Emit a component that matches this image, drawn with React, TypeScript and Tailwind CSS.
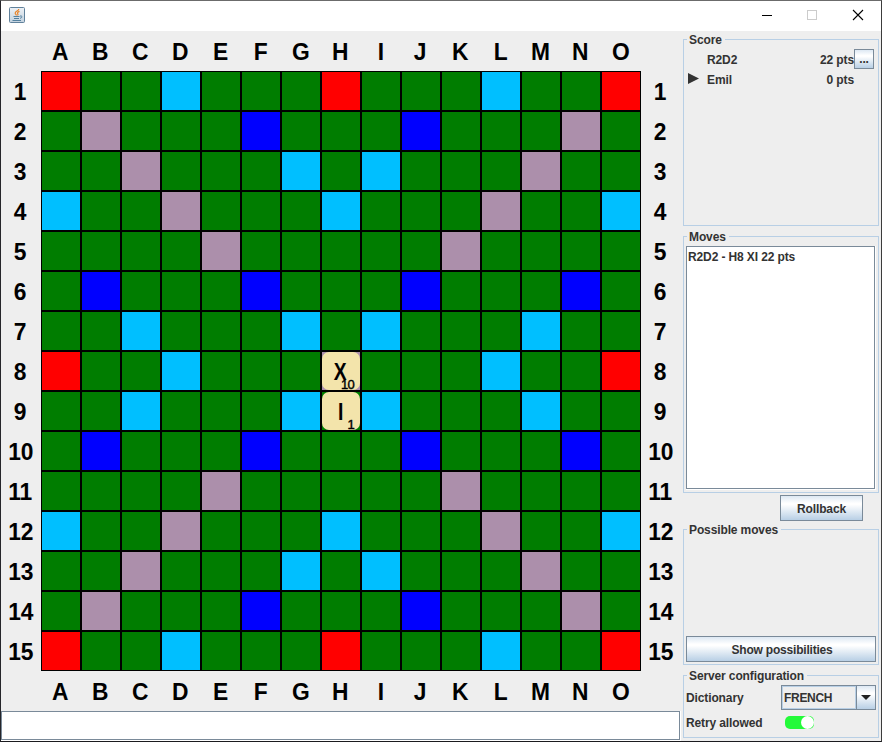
import type { ReactNode } from "react";

const COLS = "ABCDEFGHIJKLMNO".split("");

// R: triple word, P: double word, B: triple letter, C: double letter
const BOARD = [
  "R..C...R...C..R",
  ".P...B...B...P.",
  "..P...C.C...P..",
  "C..P...C...P..C",
  "....P.....P....",
  ".B...B...B...B.",
  "..C...C.C...C..",
  "R..C...P...C..R",
  "..C...C.C...C..",
  ".B...B...B...B.",
  "....P.....P....",
  "C..P...C...P..C",
  "..P...C.C...P..",
  ".P...B...B...P.",
  "R..C...R...C..R",
];

const COLORS: Record<string, string> = {
  R: "bg-[#ff0000]",
  P: "bg-[#ac8fab]",
  B: "bg-[#0000ff]",
  C: "bg-[#00bfff]",
  ".": "bg-[#007d00]",
};

const TILES: Record<string, { letter: string; value: string }> = {
  "7-7": { letter: "X", value: "10" },
  "8-7": { letter: "I", value: "1" },
};

function Label({ children }: { children?: ReactNode }) {
  return (
    <div className="flex h-10 w-10 items-center justify-center text-2xl leading-none font-bold text-black">
      <span className="[transform:translate(-0.5px,1px)_scaleX(0.95)]">{children}</span>
    </div>
  );
}

function Cell({ row, col }: { row: number; col: number }) {
  const tile = TILES[`${row}-${col}`];
  return (
    <div className={`h-10 w-10 border border-black ${COLORS[BOARD[row][col]]}`}>
      {tile && (
        <div className="relative flex h-full w-full items-center justify-center rounded-[7px] bg-[#f3e4ab] text-black">
          <span className="text-[23px] leading-none font-bold [transform:translate(-0.5px,1px)_scaleX(0.84)]">{tile.letter}</span>
          <span className="absolute right-[6px] bottom-[-1px] text-[13px] leading-[13px] font-normal tracking-[-0.7px] [-webkit-text-stroke:0.4px_black]">{tile.value}</span>
        </div>
      )}
    </div>
  );
}

function LetterRow() {
  return (
    <div className="flex">
      <Label />
      {COLS.map((c) => (
        <Label key={c}>{c}</Label>
      ))}
      <Label />
    </div>
  );
}

function Group({ title, className, children }: { title: string; className: string; children?: ReactNode }) {
  return (
    <section className={`relative ml-0.5 w-[196px] shrink-0 border border-[#b8cfe5] ${className}`}>
      <h2 className="absolute -top-[8px] left-[3px] bg-[#eeeeee] pr-[3px] pl-[2px] leading-4 whitespace-nowrap">{title}</h2>
      {children}
    </section>
  );
}

const METAL =
  "flex items-center justify-center border border-[#7a8a99] bg-[linear-gradient(to_bottom,#dde8f3_0%,#ffffff_30%,#ffffff_36%,#b8cfe5_100%)]";

export default function App() {
  return (
    <div className="flex h-[742px] w-[882px] flex-col overflow-hidden border border-t-[#6b6b6b] border-r-[#3c3c3c] border-b-[#1b1b1f] border-l-[#25252a] bg-[#eeeeee] font-['Liberation_Sans',Arial,sans-serif] text-xs font-bold tracking-[-0.12px] text-[#333333]">
      <header className="flex h-[30px] shrink-0 items-center bg-white">
        <svg className="mt-[-2px] ml-2" width="16" height="16" viewBox="0 0 16 16" fill="none">
          <defs>
            <linearGradient id="tile" x1="0" y1="0" x2="0" y2="1">
              <stop offset="0" stopColor="#edf1f5" />
              <stop offset="1" stopColor="#c3d2df" />
            </linearGradient>
          </defs>
          <rect x="0.5" y="0.5" width="15" height="15" rx="1" fill="url(#tile)" stroke="#60819b" />
          <path d="M9.8 2C10 4 6 4.2 6.2 6.2C6.3 7.2 7.4 7.7 7.4 8.5M10.5 4.4C8.8 5 8 5.8 8.7 6.7C9.2 7.3 9 7.9 8.4 8.4" stroke="#e98429" strokeWidth="1.2" />
          <path d="M4.5 9.5H10.5M5 11.5H10M11 9C13.6 8.4 13.6 10.9 11 11.3M3.5 13.5H12" stroke="#54819f" strokeWidth="1" />
        </svg>
        <svg className="ml-auto" width="120" height="30" viewBox="0 0 120 30" fill="none" shapeRendering="crispEdges">
          <path d="M1 14.5H11" stroke="#000" />
          <rect x="46.5" y="9.5" width="9" height="9" stroke="#cccccc" />
          <path d="M92 9L102 19M102 9L92 19" stroke="#000" strokeWidth="1.1" shapeRendering="auto" />
        </svg>
      </header>

      <div className="flex min-h-0 flex-1">
        <main className="flex w-[680px] shrink-0 flex-col">
          <LetterRow />
          {BOARD.map((_, r) => (
            <div key={r} className="flex">
              <Label>{r + 1}</Label>
              {COLS.map((c, i) => (
                <Cell key={c} row={r} col={i} />
              ))}
              <Label>{r + 1}</Label>
            </div>
          ))}
          <LetterRow />
          <div className="h-[30px] bg-white pb-px">
            <input aria-label="Message" className="block h-[29px] w-[679px] border border-[#7a8a99] bg-white px-1 outline-none" />
          </div>
        </main>

        <aside className="flex w-[200px] flex-col pt-2">
          <Group title="Score" className="h-[187px] pt-[9px] pl-[3px]">
            <div className="flex h-5 items-center">
              <span className="ml-5 w-[60px] pt-[2px]">R2D2</span>
              <span className="w-[87px] pt-[2px] text-right">22 pts</span>
              <button className={`${METAL} h-5 w-5 leading-none`}>...</button>
            </div>
            <div className="flex h-5 items-center">
              <svg className="ml-px" width="19" height="12" viewBox="0 0 19 12">
                <path d="M0 0L11 5.5L0 11Z" fill="#333333" />
              </svg>
              <span className="w-[60px] pt-[2px]">Emil</span>
              <span className="w-[87px] pt-[2px] text-right">0 pts</span>
            </div>
          </Group>

          <Group title="Moves" className="mt-[10px] h-[257px] pt-[9px] pl-[2px]">
            <div className="h-[244px] w-[190px] border-r border-b border-white">
              <div className="h-full border border-[#7a8a99] bg-white pt-[2px] pl-px leading-4">
                R2D2 - H8 XI 22 pts
              </div>
            </div>
          </Group>

          <button className={`${METAL} mt-[2px] ml-[99px] h-[26px] w-[83px] shrink-0 pt-[2px]`}>Rollback</button>

          <Group title="Possible moves" className="mt-[8px] flex h-[136px] flex-col justify-end pb-[2px] pl-[2px]">
            <button className={`${METAL} h-[26px] w-[190px] pt-[2px] pl-[2px] tracking-[-0.2px]`}>Show possibilities</button>
          </Group>

          <Group title="Server configuration" className="mt-[10px] h-[63px] pt-[9px] pl-[2px]">
            <div className="flex h-[25px] items-center">
              <span className="w-[95px]">Dictionary</span>
              <div className="flex h-[25px] w-[95px] border border-[#7a8a99]">
                <span className="flex flex-1 items-center border border-[#b8cfe5] pl-px tracking-[-0.3px]">FRENCH</span>
                <span className={`${METAL} w-[19px] border-y-0 border-r-0`}>
                  <svg width="10" height="5" viewBox="0 0 10 5">
                    <path d="M0 0H10L5 5Z" fill="#222" />
                  </svg>
                </span>
              </div>
            </div>
            <div className="flex h-[25px] items-center">
              <span className="w-[99px]">Retry allowed</span>
              <div className="flex h-[13px] w-[29px] items-center justify-end rounded-[5px] bg-[#23fa39]">
                <span className="h-[13px] w-[13px] rounded-full bg-white" />
              </div>
            </div>
          </Group>
        </aside>
      </div>
    </div>
  );
}
